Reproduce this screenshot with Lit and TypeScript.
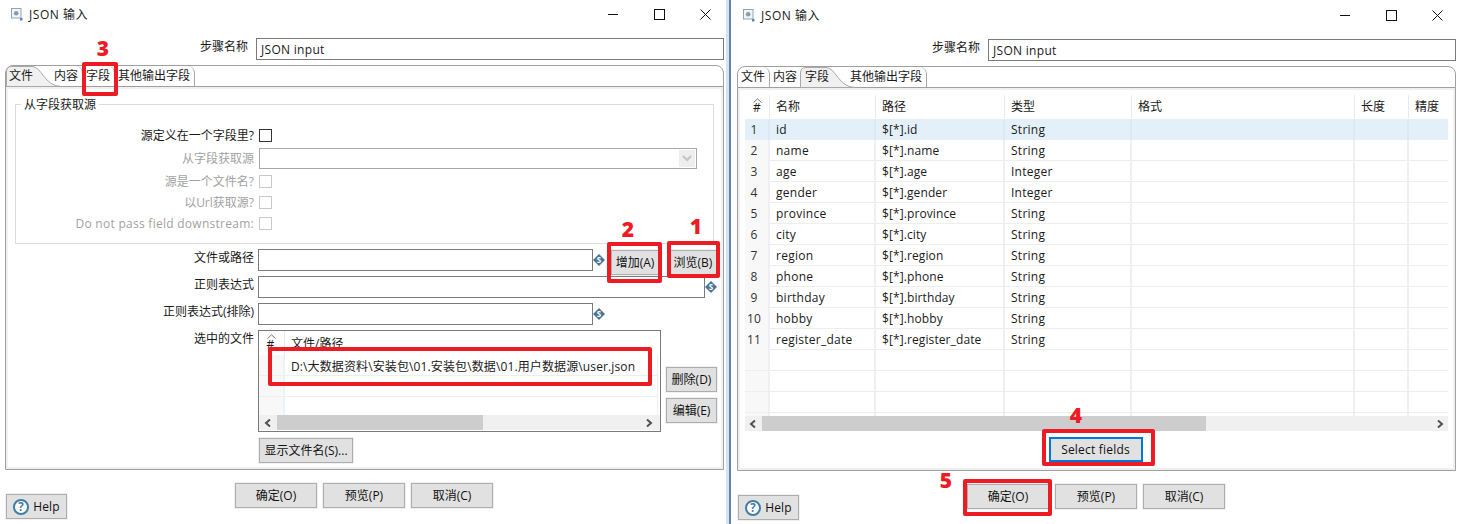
import { LitElement, html, css, svg } from "lit";
import { customElement, property } from "lit/decorators.js";

const chevron = (dir: "l" | "r") => html`<svg class="chev" width="10" height="10" viewBox="0 0 10 10"><path d="${dir === "l" ? "M7 1.5 3 5l4 3.5" : "M3 1.5 7 5 3 8.5"}" fill="none" stroke="#505050" stroke-width="2"/></svg>`;
const sortArrow = html`<svg class="sort" width="9" height="5" viewBox="0 0 9 5"><path d="M.5 4.5 4.5.8l4 3.7" fill="none" stroke="#777" stroke-width="1"/></svg>`;
const varIcon = html`<svg class="var" width="12" height="12" viewBox="0 0 12 12"><path d="M6 0 12 6 6 12 0 6Z" fill="#4a7596"/><text x="6" y="8.800" text-anchor="middle" font-size="8" font-weight="700" fill="#fff" font-family="Open Sans, sans-serif">S</text></svg>`;

@customElement("win-dialog")
class WinDialog extends LitElement {
  @property({ type: Number }) active = 0;
  static styles = css`
    :host { display: block; width: 726px; height: 524px; flex: none; }
    .title { height: 30px; display: flex; align-items: center; padding: 0 15px 2px 11px; box-sizing: border-box; }
    .title span { margin-left: 6px; letter-spacing: .55px; }
    .controls { margin-left: auto; display: flex; gap: 35px; }
    .name { display: flex; justify-content: flex-end; gap: 8px; margin: 8px 2px 5px 0; }
    .input { height: 22px; box-sizing: border-box; border: 1px solid #7a7a7a; background: #fff; padding-left: 4px; line-height: 20px; }
    .name .input { width: 468px; font-size: 12px; line-height: 21px; letter-spacing: .3px; }
    .folder { width: 719px; height: 405px; margin-left: 5px; box-sizing: border-box; border: 1px solid #a0a0a0; border-radius: 8px 8px 0 0; display: flex; flex-direction: column; }
    .strip { height: 21px; flex: none; box-sizing: border-box; border-bottom: 1px solid #a0a0a0; display: flex; padding-left: 0; }
    .tab { position: relative; padding: 0 4px; height: 20px; line-height: 20px; border-right: 1px solid #a8a8a8; border-top-right-radius: 7px; margin-right: -1px; }
    .tab:first-child { padding-left: 3px; }
    .tab.sel { border-right: none; padding-right: 17px; margin-right: 0; }
    .tab.before { border-right-color: transparent; }
    .tab i { font-style: normal; position: relative; }
    .tabshape { position: absolute; left: 0; top: 0; }
    .tab.nonfirst .tabshape { left: -1px; }
    .frame { flex: 1; border: 2px solid #f0f0f0; border-top-width: 2px; display: flex; flex-direction: column; min-height: 0; }
    fieldset { margin: 7px 0 0 7px; width: 699px; height: 148px; box-sizing: border-box; border: 1px solid #dcdcdc; padding: 12px 0 0 0; }
    legend { margin-left: 5px; padding: 0 3px; line-height: 17px; }
    .crow { display: flex; align-items: center; height: 21px; gap: 5px; }
    .crow.sel { margin: 2px 0; }
    .crow label { width: 238px; text-align: right; color: #a2a2a2; flex: none; }
    .crow label.on { color: #1a1a1a; }
    .crow label.lat { letter-spacing: .27px; }
    .cb { width: 13px; height: 13px; box-sizing: border-box; border: 1px solid #c9c9c9; }
    .cb.on { border-color: #333; }
    .select { width: 438px; height: 21px; box-sizing: border-box; border: 1px solid #a8a8a8; display: flex; justify-content: flex-end; align-items: center; padding-right: 1px; }
    .select b { width: 16px; height: 17px; background: #eee; display: flex; align-items: center; justify-content: center; }
    .frow { display: flex; margin-left: 7px; height: 27px; }
    .frow > label { width: 239px; flex: none; text-align: right; line-height: 17px; margin-right: 4px; }
    .frow .input.short { width: 335px; }
    .frow .input.long { width: 447px; }
    .frow .var { margin: 5px 0 0 0; }
    .frow .short + .var { margin-left: 0; }
    .btn { height: 25px; box-sizing: border-box; border: 1px solid #adadad; background: #e1e1e1; box-shadow: 0 0 0 1px #f1f1f1; display: flex; align-items: center; justify-content: center; color: #111; }
    .b48 { width: 48px; }
    .b51 { width: 51px; }
    .add { margin: 1px 0 0 6px; }
    .browse { margin: 1px 0 0 10px; }
    .first { margin-top: 5px; }
    .ftable { width: 403px; height: 102px; box-sizing: border-box; border: 1px solid #7a7a7a; display: flex; flex-direction: column; }
    .fhead { height: 24px; flex: none; display: flex; position: relative; }
    .fhead div { position: relative; line-height: 25px; }
    .nc { width: 26px; flex: none; box-sizing: border-box; text-align: center; }
    .fhead .nc { border-right: 1px solid #e8e8e8; padding: 1px 2px 0 0; }
    .fhead .p { padding-left: 6px; }
    .sort { position: absolute; left: 8px; top: 3px; }
    .frows { flex: 1; overflow: hidden; border-right: 1px solid #eee; margin-right: 2px; }
    .frows .r { height: 21px; box-sizing: border-box; border-bottom: 1px solid #eee; display: flex; line-height: 23px; }
    .frows .r .nc { background: #f8f8f8; border-right: 2px solid #edf1f8; }
    .frows .r .p { padding-left: 6px; letter-spacing: .12px; white-space: nowrap; }
    .scroll { height: 15px; flex: none; background: #f0f0f0; display: flex; align-items: center; position: relative; }
    .chev { flex: none; }
    .thumb { height: 15px; background: #cdcdcd; }
    .sp { flex: 1; }
    .ftable .scroll { margin-top: 0; padding: 0 6px 0 4px; margin-bottom: 1px; }
    .ftable .thumb { width: 206px; margin-left: 4px; }
    .side { margin-left: 5px; display: flex; flex-direction: column; gap: 6px; padding-top: 37px; }
    .tall { height: 108px; }
    .show { width: 94px; margin-left: 251px; }
    .dtable { margin: 5px 0 0 5px; width: 703px; height: 336px; display: flex; flex-direction: column; }
    .dhead, .drow { display: grid; grid-template-columns: 25px 106px 129px 127px 223px 54px 39px; }
    .dhead { height: 24px; flex: none; }
    .dhead div { position: relative; box-sizing: border-box; padding-left: 6px; border-right: 1px solid #e8e8e8; line-height: 24px; height: 23px; }
    .dhead div:first-child { padding: 1px 0 0; text-align: center; }
    .dhead div:last-child { border-right: none; }
    .drows { flex: 1; overflow: hidden; }
    .drow { height: 21px; box-sizing: border-box; border-bottom: 1px solid #eee; line-height: 22px; letter-spacing: .26px; }
    .drow div { box-sizing: border-box; padding-left: 6px; border-right: 2px solid #eef0f5; overflow: visible; white-space: nowrap; }
    .drow div:first-child { background: #f8f8f8; padding-left: 0; padding-right: 5px; text-align: center; color: #333; }
    .drow div:nth-child(3) { letter-spacing: .1px; }
    .drow div:last-child { border-right: none; }
    .drow.hi { background: #e3f0fa; border-bottom-color: #e3f0fa; }
    .drow.hi div { border-right-color: #dce8f3; }
    .drow.hi div:first-child { background: #e3f0fa; }
    .dtable .scroll { padding: 0 3px 0 3px; }
    .dtable .thumb { width: 444px; margin-left: 4px; }
    .selbtn { width: 94px; margin: 6px auto 0; border: 2px solid #0078d7; background: #e1e1e1; box-shadow: none; position: relative; left: -1px; letter-spacing: .2px; }
    .footer { display: flex; align-items: flex-start; padding-left: 6px; }
    .help { width: 61px; margin-top: 24px; gap: 4px; letter-spacing: .1px; }
    .help svg { flex: none; }
    .btns { display: flex; gap: 6px; margin: 13px 0 0 168px; }
    .btns .btn { width: 82px; }
  `;
  render() {
    const tabs = ["文件", "内容", "字段", "其他输出字段"];
    const a = this.active;
    const rows = [
      ["id", "String"], ["name", "String"], ["age", "Integer"], ["gender", "Integer"], ["province", "String"], ["city", "String"],
      ["region", "String"], ["phone", "String"], ["birthday", "String"], ["hobby", "String"], ["register_date", "String"],
    ];
    return html`
      <div class="title">
        <svg width="12" height="13" viewBox="0 0 12 13"><rect x=".5" y=".5" width="9.500" height="9.500" fill="#f2f5f8" stroke="#8fa5b8"/><circle cx="5.200" cy="5.200" r="2.300" fill="#8e9aa6"/><rect x="9" y="10" width="2.500" height="2.500" fill="#5d86a8"/></svg>
        <span>JSON 输入</span>
        <div class="controls">
          <svg width="11" height="11" viewBox="0 0 11 11"><path d="M0 5.500h10" stroke="#111"/></svg>
          <svg width="11" height="11" viewBox="0 0 11 11"><rect x=".5" y=".5" width="10" height="10" fill="none" stroke="#111"/></svg>
          <svg width="11" height="11" viewBox="0 0 11 11"><path d="M.5.5l10 10M10.500.5l-10 10" stroke="#111"/></svg>
        </div>
      </div>
      <div class="name"><label>步骤名称</label><div class="input">JSON input</div></div>
      <div class="folder">
        <div class="strip">
          ${tabs.map((t, i) => html`<div class="tab ${i === a ? "sel" : ""} ${i + 1 === a ? "before" : ""} ${i ? "nonfirst" : ""}">
            ${i === a ? svg`<svg class="tabshape" width="56" height="21" viewBox="0 0 56 21"><path d="M0.500 20.500V6Q.5 .5 6 .5H26C36 .5 38 20 55 20.500Z" fill="#f0f0f0" stroke="#a8a8a8"/></svg>` : ""}
            <i>${t}</i></div>`)}
        </div>
        <div class="frame">${a === 0 ? this.fileTab() : this.fieldsTab(rows)}</div>
      </div>
      <div class="footer">
        <div class="btn help">
          <svg width="16" height="16" viewBox="0 0 16 16"><circle cx="8" cy="8" r="7" fill="#fff" stroke="#3f7ea6" stroke-width="2"/><text x="8" y="12.300" text-anchor="middle" font-size="11.500" font-weight="700" fill="#3f7ea6" font-family="Open Sans, sans-serif">?</text></svg>
          <span>Help</span>
        </div>
        <div class="btns"><div class="btn">确定(O)</div><div class="btn">预览(P)</div><div class="btn">取消(C)</div></div>
      </div>`;
  }
  fileTab() {
    return html`
      <fieldset>
        <legend>从字段获取源</legend>
        <div class="crow"><label class="on">源定义在一个字段里?</label><div class="cb on"></div></div>
        <div class="crow sel"><label>从字段获取源</label><div class="select"><b><svg width="10" height="7" viewBox="0 0 10 7"><path d="M1 1l4 4 4-4" fill="none" stroke="#c4c4c4" stroke-width="2"/></svg></b></div></div>
        <div class="crow"><label>源是一个文件名?</label><div class="cb"></div></div>
        <div class="crow"><label>以Url获取源?</label><div class="cb"></div></div>
        <div class="crow"><label class="lat">Do not pass field downstream:</label><div class="cb"></div></div>
      </fieldset>
      <div class="frow first"><label>文件或路径</label><div class="input short"></div>${varIcon}<div class="btn b48 add">增加(A)</div><div class="btn b48 browse">浏览(B)</div></div>
      <div class="frow"><label>正则表达式</label><div class="input long"></div>${varIcon}</div>
      <div class="frow"><label>正则表达式(排除)</label><div class="input short"></div>${varIcon}</div>
      <div class="frow tall">
        <label>选中的文件</label>
        <div class="ftable">
          <div class="fhead"><div class="nc">${sortArrow}#</div><div class="p">文件/路径</div></div>
          <div class="frows">
            <div class="r"><div class="nc"></div><div class="p">D:\\大数据资料\\安装包\\01.安装包\\数据\\01.用户数据源\\user.json</div></div>
            <div class="r"><div class="nc"></div></div>
            <div class="r"><div class="nc"></div></div>
          </div>
          <div class="scroll">${chevron("l")}<div class="thumb"></div><div class="sp"></div>${chevron("r")}</div>
        </div>
        <div class="side"><div class="btn b51">删除(D)</div><div class="btn b51">编辑(E)</div></div>
      </div>
      <div class="btn show">显示文件名(S)...</div>`;
  }
  fieldsTab(rows: string[][]) {
    const heads = ["#", "名称", "路径", "类型", "格式", "长度", "精度"];
    const empty = Array.from({ length: 4 });
    return html`
      <div class="dtable">
        <div class="dhead">${heads.map((h, i) => html`<div>${i === 0 ? sortArrow : ""}${h}</div>`)}</div>
        <div class="drows">
          ${rows.map((r, i) => html`<div class="drow ${i === 0 ? "hi" : ""}"><div>${i + 1}</div><div>${r[0]}</div><div>$[*].${r[0]}</div><div>${r[1]}</div><div></div><div></div><div></div></div>`)}
          ${empty.map(() => html`<div class="drow"><div></div><div></div><div></div><div></div><div></div><div></div><div></div></div>`)}
        </div>
        <div class="scroll">${chevron("l")}<div class="thumb"></div><div class="sp"></div>${chevron("r")}</div>
      </div>
      <div class="btn selbtn">Select fields</div>`;
  }
}

@customElement("app-root")
class AppRoot extends LitElement {
  static styles = css`
    :host { display: block; width: 1460px; height: 524px; overflow: hidden; position: relative; background: #fff; font: 12px/17px "Open Sans", "Noto Sans CJK SC", sans-serif; color: #1a1a1a; }
    .desk { display: flex; }
    .divider { width: 6px; flex: none; height: 524px; background: linear-gradient(to right, #d5e3f1 0 3px, #5f84ad 3px 5px, #fff 5px); }
    .mark { position: absolute; box-sizing: border-box; border: 4px solid #ed1c24; border-radius: 2px; pointer-events: none; }
    .num { position: absolute; color: #ed1c24; font: 800 21px/22px "Open Sans", sans-serif; transform: translate(-50%, -50%); }
  `;
  render() {
    const marks = [
      [82, 62, 36, 34], [607, 242, 55, 41], [667, 241, 53, 37], [268, 347, 384, 39], [1042, 429, 113, 37], [963, 479, 89, 37],
    ];
    const nums: [string, number, number][] = [["3", 103, 48], ["2", 628, 229], ["1", 696, 226], ["4", 1076, 415], ["5", 946, 480]];
    return html`
      <div class="desk">
        <win-dialog .active=${0}></win-dialog>
        <div class="divider"></div>
        <win-dialog .active=${2} style="padding-top:1px"></win-dialog>
      </div>
      ${marks.map((m) => html`<div class="mark" style="left:${m[0]}px;top:${m[1]}px;width:${m[2]}px;height:${m[3]}px"></div>`)}
      ${nums.map((n) => html`<div class="num" style="left:${n[1]}px;top:${n[2]}px">${n[0]}</div>`)}
    `;
  }
}
